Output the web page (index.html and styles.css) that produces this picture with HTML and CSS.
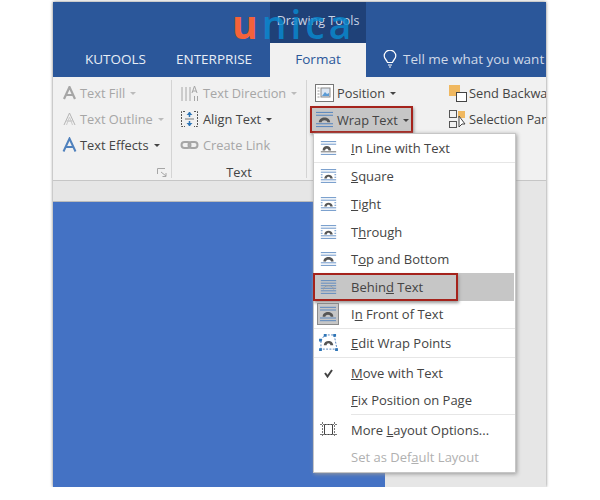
FILE: index.html
```html
<!DOCTYPE html>
<html lang="en">
<head>
    <meta charset="UTF-8">
    <title>Wrap Text menu</title>
    <link rel="stylesheet" href="styles.css">
</head>
<body>

    <svg class="defs" width="0" height="0">
        <symbol id="wrap" viewBox="0 0 20 18">
            <path d="M1 1.500h18M1 4.500h18M1 13.500h18M1 16.500h18" stroke="#4f81bd" fill="none"/>
            <path d="M4 12c0-7 12-7 12 0h-3c0-3-6-3-6 0z" fill="#555"/>
        </symbol>
        <symbol id="wrap-inline" viewBox="0 0 20 18">
            <path d="M1 1.500h18M1 4.500h18M1 16.500h18" stroke="#4f81bd" fill="none"/>
            <path d="M1 13.500h18" stroke="#555" fill="none"/>
            <path d="M3 12c0-7 10-7 10 0h-3c0-3-4-3-4 0z" fill="#555"/>
        </symbol>
        <symbol id="wrap-square" viewBox="0 0 20 18">
            <path d="M1 1.500h18M1 4.500h18M1 13.500h18M1 16.500h18" stroke="#4f81bd" fill="none"/>
            <path d="M1 7.500h2M1 10.500h2M17 7.500h2M17 10.500h2" stroke="#4f81bd" fill="none"/>
            <path d="M5 12c0-6 10-6 10 0h-3c0-3-4-3-4 0z" fill="#555"/>
        </symbol>
        <symbol id="wrap-behind" viewBox="0 0 20 18">
            <path d="M1 1.500h18M1 4.500h18M1 7.500h18M1 10.500h18M1 13.500h18M1 16.500h18" stroke="#4f81bd" fill="none"/>
            <path d="M4 12c0-6 12-6 12 0" stroke="#999" fill="none"/>
        </symbol>
    </svg>

    <div class="window">
        <div class="titlebar">
            <div class="tabs">
                <span class="tab tab-kutools">KUTOOLS</span>
                <span class="tab tab-enterprise">ENTERPRISE</span>
                <div class="tool-tab">
                    <div class="tool-name">Drawing Tools</div>
                    <div class="tab-active">Format</div>
                </div>
                <div class="tell-me">
                    <svg class="bulb" width="14" height="18" viewBox="0 0 14 18">
                        <path d="M4.500 12.500C4 10 1.200 9 1.200 6a5.800 5.800 0 0 1 11.600 0c0 3-2.800 4-3.300 6.500zM5 15h4M6 17h2" stroke="#fff" stroke-width="1.200" fill="none"/>
                    </svg>
                    <span>Tell me what you want to do</span>
                </div>
            </div>
        </div>

        <div class="ribbon">
            <div class="group group-style">
                <div class="group-rows">
                    <div class="cmd off">
                        <svg class="ico-a" width="13" height="14" viewBox="0 0 13 14"><path d="M1 13L6.500 1 12 13M3 9h7" stroke="#a6a6a6" stroke-width="2.200" fill="none"/></svg>
                        Text Fill <i class="caret"></i>
                    </div>
                    <div class="cmd off">
                        <svg class="ico-a" width="13" height="14" viewBox="0 0 13 14"><path d="M1 13L6.500 1 12 13M3.500 9h6" stroke="#b5b5b5" fill="none"/><path d="M3.500 13L6.500 5 9.500 13" stroke="#ccc" fill="none"/></svg>
                        Text Outline <i class="caret"></i>
                    </div>
                    <div class="cmd">
                        <svg class="ico-a" width="15" height="16" viewBox="0 0 15 16"><path d="M1.500 14.500L7.500 1.500l6 13M4 10h7" stroke="#4f81bd" stroke-width="2" fill="none"/></svg>
                        Text Effects <i class="caret dark"></i>
                    </div>
                </div>
                <svg class="launcher" width="10" height="9" viewBox="0 0 10 9"><path d="M.5 6V.5H8M4 4l5 4M9 5v3.500H5.500" stroke="#a6a6a6" fill="none"/></svg>
            </div>

            <div class="group group-text">
                <div class="group-rows">
                    <div class="cmd off">
                        <svg class="ico-b" width="19" height="18" viewBox="0 0 19 18"><path d="M2 3v14M6 3v14M10 3v14" stroke="#a6a6a6" fill="none"/><path d="M12 9l2.500-7L17 9M13 7h3M14.500 12v5M17.500 12v5" stroke="#a6a6a6" fill="none"/></svg>
                        Text Direction <i class="caret"></i>
                    </div>
                    <div class="cmd">
                        <svg class="ico-b" width="19" height="18" viewBox="0 0 19 18"><path d="M5 1.500H1.500v15H5M14 1.500h3.500v15H14" stroke="#555" fill="none" stroke-dasharray="2 1"/><path d="M9.500 2v5M9.500 11v5" stroke="#2e75b6" stroke-width="1.500"/><path d="M6.500 5l3-3 3 3zM6.500 13l3 3 3-3z" fill="#2e75b6"/><path d="M5 9h9" stroke="#777"/></svg>
                        Align Text <i class="caret dark"></i>
                    </div>
                    <div class="cmd off">
                        <svg class="ico-b" width="19" height="18" viewBox="0 0 19 18"><rect x="1.500" y="6" width="9" height="6" rx="3" stroke="#a6a6a6" stroke-width="2" fill="none"/><rect x="8.500" y="6" width="9" height="6" rx="3" stroke="#a6a6a6" stroke-width="2" fill="none"/></svg>
                        Create Link
                    </div>
                </div>
                <div class="group-label">Text</div>
            </div>

            <div class="group group-arrange">
                <div class="arrange-col">
                    <div class="cmd cmd-position">
                        <svg class="ico-c" width="19" height="18" viewBox="0 0 19 18"><rect x=".5" y=".5" width="18" height="17" fill="#fff" stroke="#777"/><rect x="6" y="4" width="9" height="9" fill="#dce6f2" stroke="#888"/><path d="M7 12l3-4 2 2 2-1v3z" fill="#5b9bd5"/><path d="M2.500 4h2M2.500 7h2M2.500 10h2M2.500 13h2" stroke="#999"/></svg>
                        Position <i class="caret dark"></i>
                    </div>
                    <div class="red-box wrap-btn">
                        <svg class="ico-c" width="19" height="17"><use href="#wrap"/></svg>
                        Wrap Text <i class="caret dark"></i>
                    </div>
                </div>
                <div class="arrange-col">
                    <div class="cmd">
                        <svg class="ico-d" width="18" height="17" viewBox="0 0 18 17"><rect width="11" height="11" fill="#f0b860"/><rect x="7.500" y="7.500" width="10" height="9" fill="#fff" stroke="#444"/></svg>
                        Send Backward
                    </div>
                    <div class="cmd">
                        <svg class="ico-d" width="18" height="18" viewBox="0 0 18 18"><rect x=".5" y=".5" width="7" height="7" fill="none" stroke="#555"/><rect x=".5" y="11.500" width="7" height="6" fill="none" stroke="#555"/><rect x="9" y="1" width="7" height="7" fill="#f0b860"/><path d="M10 6v11l3-3 3 0z" fill="#fff" stroke="#444"/></svg>
                        Selection Pane
                    </div>
                </div>
            </div>
        </div>

        <div class="ruler-bar"></div>

        <div class="doc-area">
            <div class="doc-shape"></div>
        </div>

        <div class="menu">
            <div class="item">
                <svg class="item-ico"><use href="#wrap-inline"/></svg>
                <span><u>I</u>n Line with Text</span>
            </div>
            <div class="sep"></div>
            <div class="item">
                <svg class="item-ico"><use href="#wrap-square"/></svg>
                <span><u>S</u>quare</span>
            </div>
            <div class="item">
                <svg class="item-ico"><use href="#wrap-square"/></svg>
                <span><u>T</u>ight</span>
            </div>
            <div class="item">
                <svg class="item-ico"><use href="#wrap-square"/></svg>
                <span>T<u>h</u>rough</span>
            </div>
            <div class="item">
                <svg class="item-ico"><use href="#wrap"/></svg>
                <span>T<u>o</u>p and Bottom</span>
            </div>
            <div class="item item-hover">
                <div class="red-box behind-box">
                    <svg class="item-ico"><use href="#wrap-behind"/></svg>
                    <span>Behin<u>d</u> Text</span>
                </div>
            </div>
            <div class="item">
                <div class="ico-pressed">
                    <svg width="18" height="16" viewBox="0 0 20 18"><use href="#wrap"/></svg>
                </div>
                <span>I<u>n</u> Front of Text</span>
            </div>
            <div class="sep"></div>
            <div class="item">
                <svg class="item-ico ico-edit" viewBox="0 0 20 18">
                    <path d="M2 7L6 1h10l3 15H2z" fill="none" stroke="#4f81bd" stroke-dasharray="2 1.500"/>
                    <path d="M5 12c0-6 10-6 10 0h-3c0-3-4-3-4 0z" fill="#555"/>
                    <path d="M0 5h3v3H0zM5 0h3v3H5zM15 0h3v3h-3zM0 15h3v3H0zM17 15h3v3h-3z" fill="#2e75b6"/>
                </svg>
                <span><u>E</u>dit Wrap Points</span>
            </div>
            <div class="sep sep-wide"></div>
            <div class="item">
                <svg class="item-ico" viewBox="0 0 17 16"><path d="M5 8l2.500 3.500L12 5" stroke="#444" stroke-width="2" fill="none"/></svg>
                <span><u>M</u>ove with Text</span>
            </div>
            <div class="item">
                <span class="item-ico"></span>
                <span><u>F</u>ix Position on Page</span>
            </div>
            <div class="sep sep-short"></div>
            <div class="item">
                <svg class="item-ico" viewBox="0 0 17 16"><rect x="4.500" y="2.500" width="8" height="10" fill="none" stroke="#444"/><path d="M0 2.500h17M0 12.500h17M2.500 0v15M14.500 0v15" stroke="#777" fill="none" stroke-dasharray="2 1"/></svg>
                <span>More <u>L</u>ayout Options...</span>
            </div>
            <div class="item item-off">
                <span class="item-ico"></span>
                <span>Set as Def<u>a</u>ult Layout</span>
            </div>
        </div>

        <div class="logo"><span class="logo-u">u</span><span class="logo-rest">nica</span></div>
    </div>

</body>
</html>
```

FILE: styles.css
```css
body {
    margin: 0;
    background-color: #fff;
    font-family: "Open Sans", Arial, sans-serif;
    color: #444;
}
.defs {
    position: absolute;
}
.window {
    position: relative;
    width: 493px;
    height: 485px;
    margin: 2px 0 0 53px;
    background-color: #e6e6e6;
    box-shadow: 0 0 3px #777;
    overflow: hidden;
}
.titlebar {
    height: 75px;
    background-color: #2b579a;
}
.tabs {
    display: flex;
    height: 100%;
    color: #fff;
    font-size: 13.500px;
    align-items: flex-end;
}
.tab {
    flex: none;
    height: 34px;
    line-height: 32px;
    color: #e8eef6;
}
.tab-kutools {
    margin-left: 32px;
    width: 91px;
}
.tab-enterprise {
    width: 94px;
}
.tool-tab {
    flex: none;
    width: 96px;
    height: 100%;
    display: flex;
    flex-direction: column;
}
.tool-name {
    height: 41px;
    line-height: 38px;
    background-color: #1f4178;
    color: #c9d4e6;
    font-size: 12.500px;
    text-align: center;
    white-space: nowrap;
}
.tab-active {
    height: 34px;
    line-height: 32px;
    background-color: #f1f1f1;
    color: #2b579a;
    text-align: center;
}
.tell-me {
    flex: none;
    display: flex;
    align-items: center;
    height: 32px;
    padding: 0 0 2px 17px;
    white-space: nowrap;
    color: #cfd9e8;
}
.bulb {
    margin-right: 6px;
}
.ribbon {
    display: flex;
    height: 104px;
    background-color: #f1f1f1;
    border-bottom: 1px solid #c6c6c6;
    box-sizing: border-box;
    font-size: 12.800px;
}
.group {
    position: relative;
    display: flex;
    flex-direction: column;
    justify-content: space-between;
    margin-top: 3px;
    height: 98px;
    border-right: 1px solid #d4d4d4;
    box-sizing: border-box;
}
.group-style {
    width: 119px;
    padding-left: 9px;
}
.group-text {
    width: 135px;
    padding-left: 8px;
}
.group-arrange {
    flex-direction: row;
    justify-content: flex-start;
    flex: 1;
    border-right: none;
    padding-left: 8px;
    white-space: nowrap;
    overflow: hidden;
}
.group-rows {
    display: flex;
    flex-direction: column;
}
.cmd {
    display: flex;
    align-items: center;
    height: 26px;
    white-space: nowrap;
}
.off {
    color: #a6a6a6;
}
.ico-a {
    width: 15px;
    margin-right: 3px;
}
.ico-b {
    margin-right: 4px;
}
.ico-c {
    margin-right: 3px;
}
.ico-d {
    margin-right: 2px;
}
.caret {
    display: inline-block;
    margin: 1px 0 0 5px;
    border-left: 3px solid transparent;
    border-right: 3px solid transparent;
    border-top: 3px solid #bbb;
}
.caret.dark {
    border-top-color: #444;
}
.launcher {
    position: absolute;
    right: 4px;
    bottom: 1px;
}
.group-label {
    text-align: center;
    line-height: 18px;
    margin-bottom: -3px;
    padding-right: 8px;
}
.arrange-col {
    display: flex;
    flex-direction: column;
}
.arrange-col + .arrange-col {
    margin-left: 36px;
}
.red-box {
    display: flex;
    align-items: center;
    box-sizing: border-box;
    border: 2px solid #a5231c;
    background-color: #c6c6c6;
    box-shadow: 1px 2px 3px #999;
}
.wrap-btn {
    width: 103px;
    height: 27px;
    margin-left: -5px;
    padding-left: 3px;
}
.menu {
    position: absolute;
    left: 260px;
    top: 131px;
    width: 203px;
    height: 340px;
    box-sizing: border-box;
    background-color: #fff;
    border: 1px solid #c6c6c6;
    box-shadow: 1px 1px 4px #999;
    font-size: 13px;
    display: flex;
    flex-direction: column;
}
.item {
    display: flex;
    align-items: center;
    height: 27.600px;
    flex: none;
}
.item-ico {
    display: block;
    flex: none;
    width: 17px;
    height: 16px;
    margin: 0 14px 0 6px;
}
.ico-edit {
    width: 19px;
    height: 17px;
    margin: 0 13px 0 5px;
}
.item-hover {
    background-color: #c6c6c6;
    margin-right: 1px;
}
.behind-box {
    width: 145px;
    height: 28px;
    margin-left: -1px;
}
.behind-box .item-ico {
    margin-left: 5px;
}
.ico-pressed {
    display: flex;
    align-items: center;
    justify-content: center;
    flex: none;
    width: 20px;
    height: 20px;
    margin: 0 12px 0 3px;
    background-color: #c6c6c6;
    border: 1px solid #8a8a8a;
}
.item-off {
    color: #b0b0b0;
}
.sep {
    height: 1px;
    flex: none;
    background-color: #e6e6e6;
}
.sep-wide {
    margin-bottom: 1px;
}
.sep-short {
    margin: 0 0 1px 37px;
}
.doc-area {
    height: 286px;
}
.ruler-bar {
    height: 20px;
    background-color: #e6e6e6;
}
.doc-shape {
    width: 332px;
    height: 286px;
    background-color: #4472c4;
    border-top: 1px solid #bbb;
    box-sizing: border-box;
}
.logo {
    position: absolute;
    left: 179px;
    top: -3px;
    font-family: "Open Sans", Arial, sans-serif;
    font-size: 39px;
    line-height: 50px;
    letter-spacing: 2px;
}
.logo-u {
    color: #f4623a;
    font-weight: 700;
    margin-right: 2px;
}
.logo-rest {
    color: rgba(10, 135, 205, 0.85);
    font-weight: 600;
    letter-spacing: 4px;
}
```
